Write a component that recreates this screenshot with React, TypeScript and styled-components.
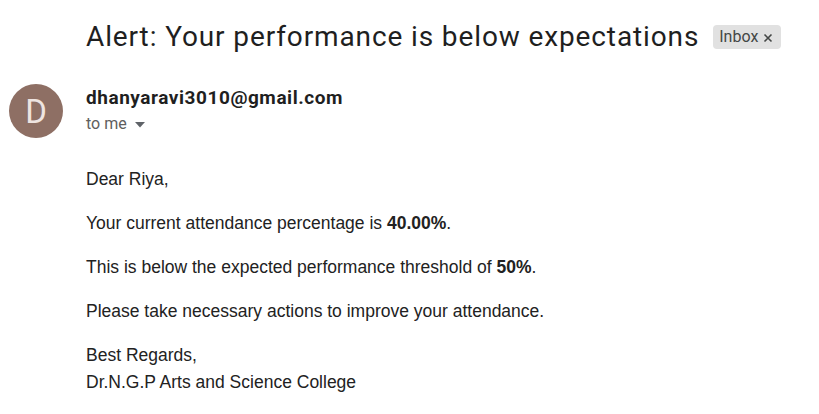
import React from "react";
import styled, { createGlobalStyle } from "styled-components";

const Global = createGlobalStyle`
  html, body { margin: 0; padding: 0; background: #ffffff; }
  body { font-family: Roboto, "Liberation Sans", Arial, sans-serif; }
`;

const Page = styled.div`
  width: 819px;
  height: 414px;
  overflow: hidden;
  background: #ffffff;
`;

const Header = styled.div`
  display: flex;
  align-items: center;
  padding: 19px 0 0 86px;
  height: 36px;
`;

const Title = styled.h2`
  margin: 0;
  font-family: Roboto, "Open Sans", sans-serif;
  font-weight: 400;
  font-size: 28px;
  line-height: 36px;
  color: #1f1f1f;
  letter-spacing: 0.88px;
  white-space: nowrap;
`;

const Chip = styled.span`
  display: inline-flex;
  align-items: center;
  gap: 5px;
  margin-left: 14px;
  height: 24px;
  padding: 0 8px 0 6px;
  border-radius: 4px;
  background: #e1e1e1;
  color: #444746;
  font-family: Roboto, sans-serif;
  font-size: 16px;
  line-height: 24px;
`;

const ChipClose = styled.svg`
  width: 10px;
  height: 10px;
  margin-top: 2px;
`;

const SenderRow = styled.div`
  display: flex;
  align-items: flex-start;
  padding: 29px 0 0 9px;
`;

const Avatar = styled.div`
  width: 54px;
  height: 54px;
  border-radius: 50%;
  background: #8e6f64;
  color: #eee4e1;
  display: flex;
  align-items: center;
  justify-content: center;
  font-family: Roboto, sans-serif;
  font-size: 33px;
  font-weight: 400;
  flex-shrink: 0;
`;

const SenderInfo = styled.div`
  display: flex;
  flex-direction: column;
  margin-left: 23px;
  padding-top: 2px;
`;

const SenderName = styled.div`
  font-family: Roboto, sans-serif;
  font-weight: 700;
  font-size: 19px;
  line-height: 24px;
  letter-spacing: 0.55px;
  color: #1f1f1f;
`;

const Recipient = styled.div`
  display: flex;
  align-items: center;
  gap: 8px;
  margin-top: 4px;
  font-family: Roboto, sans-serif;
  font-size: 16px;
  line-height: 20px;
  color: #5e5e5e;
`;

const Caret = styled.svg`
  width: 10px;
  height: 6px;
  margin-top: 1px;
`;

const Body = styled.div`
  padding: 28px 0 0 86px;
  font-family: "Liberation Sans", Arial, sans-serif;
  font-size: 17.5px;
  line-height: 26.5px;
  color: #222222;
`;

const Para = styled.p`
  margin: 0 0 17.5px 0;
`;

export default function App() {
  return (
    <Page>
      <Global />
      <Header>
        <Title>Alert: Your performance is below expectations</Title>
        <Chip>
          Inbox
          <ChipClose viewBox="0 0 10 10">
            <path d="M1.5 1.5 L8.5 8.5 M8.5 1.5 L1.5 8.5" stroke="#444746" strokeWidth="1.6" fill="none" />
          </ChipClose>
        </Chip>
      </Header>
      <SenderRow>
        <Avatar>D</Avatar>
        <SenderInfo>
          <SenderName>dhanyaravi3010@gmail.com</SenderName>
          <Recipient>
            to me
            <Caret viewBox="0 0 10 6">
              <path d="M0 0 L10 0 L5 5.5 Z" fill="#5f6368" />
            </Caret>
          </Recipient>
        </SenderInfo>
      </SenderRow>
      <Body>
        <Para>Dear Riya,</Para>
        <Para>
          Your current attendance percentage is <b>40.00%</b>.
        </Para>
        <Para>
          This is below the expected performance threshold of <b>50%</b>.
        </Para>
        <Para>Please take necessary actions to improve your attendance.</Para>
        <Para>
          Best Regards,
          <br />
          Dr.N.G.P Arts and Science College
        </Para>
      </Body>
    </Page>
  );
}
